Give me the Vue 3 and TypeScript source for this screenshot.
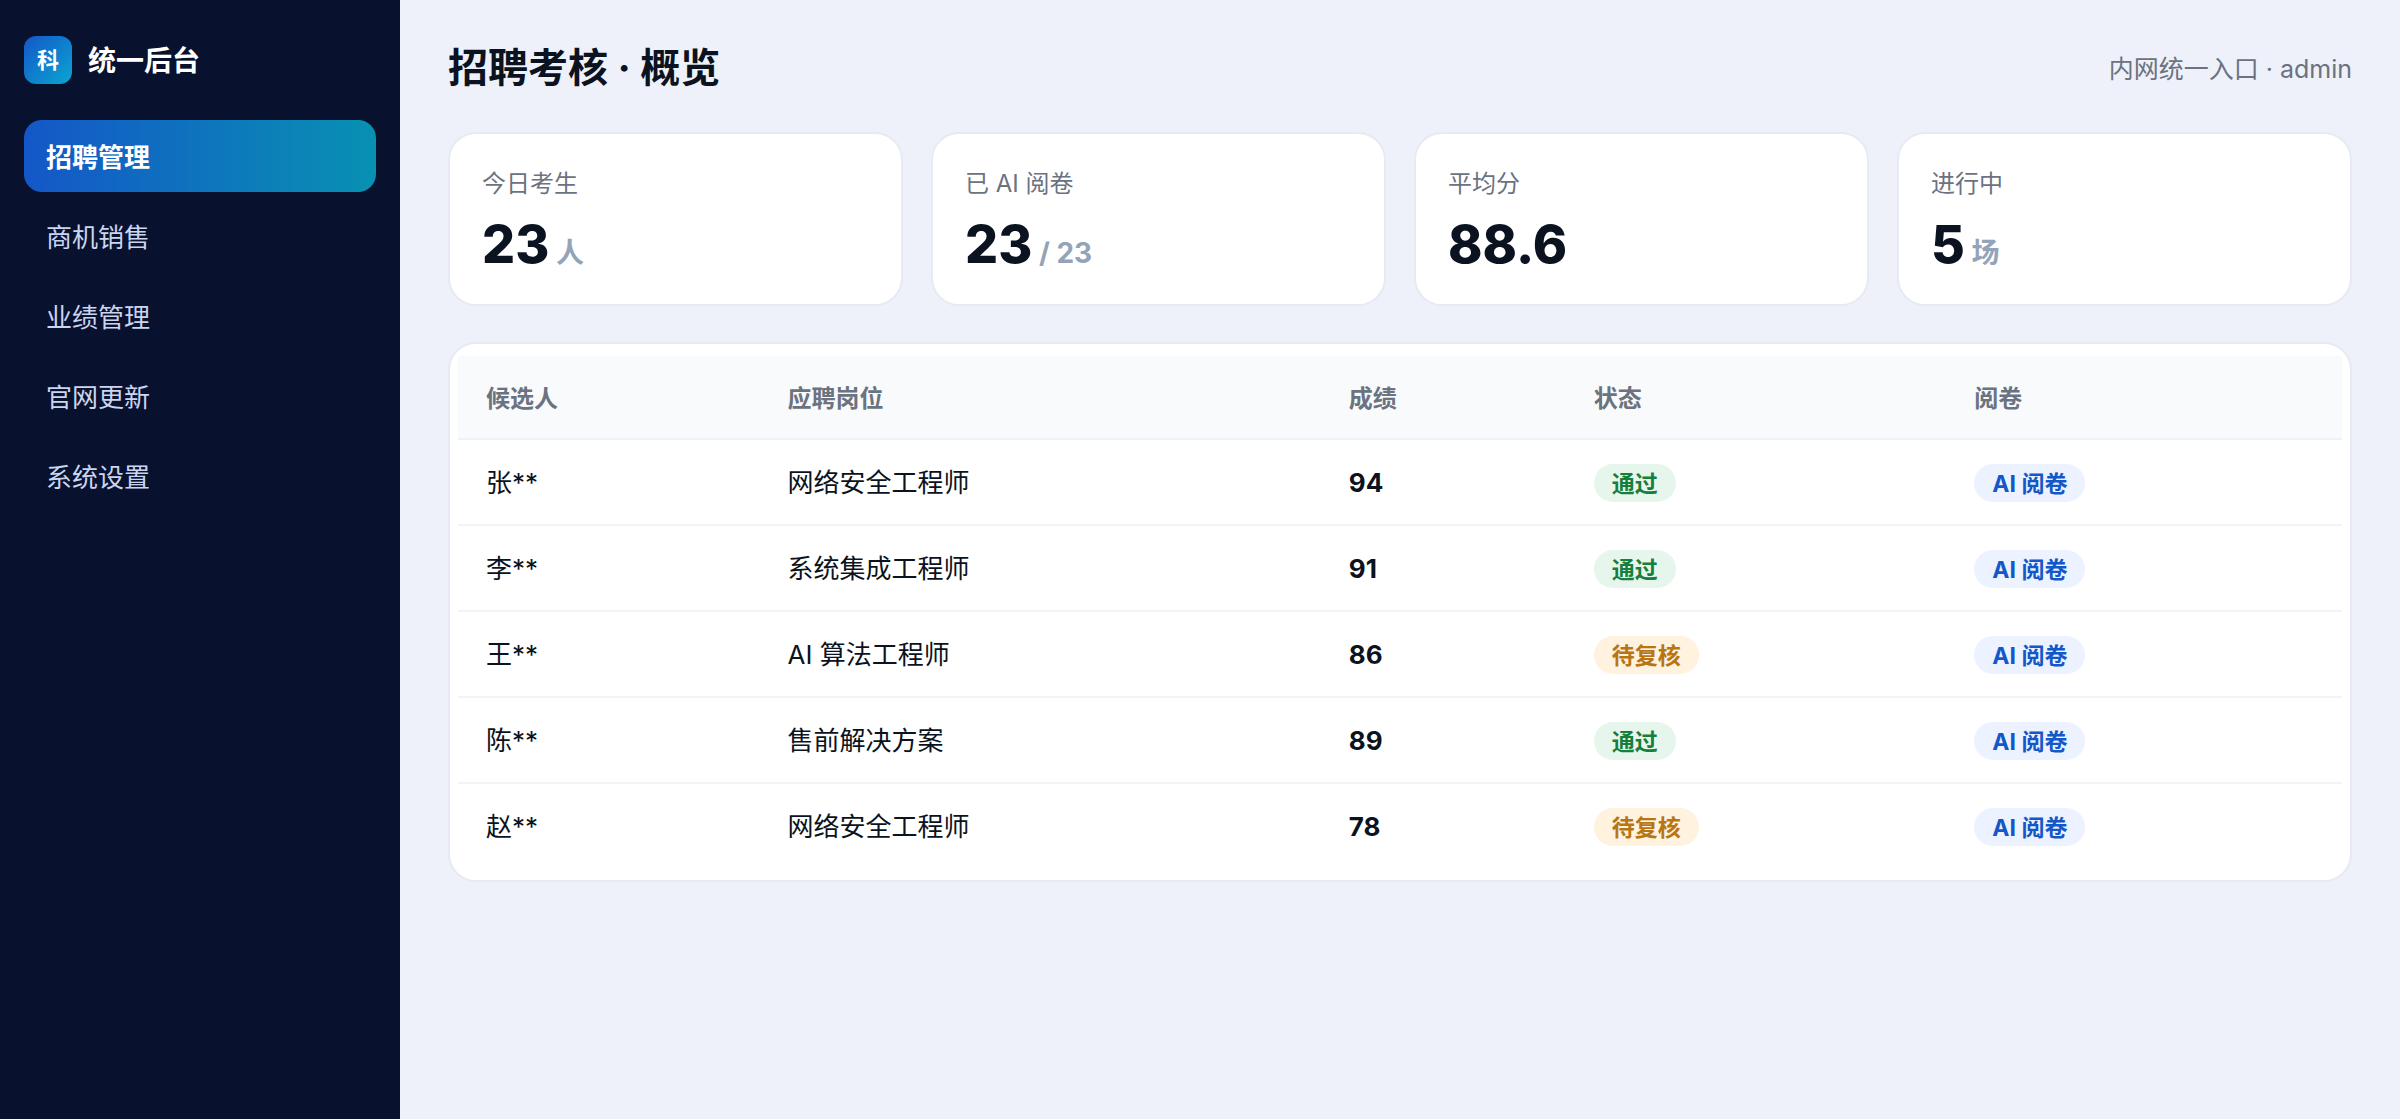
<script setup lang="ts">
import { ref } from 'vue'

interface Stat {
  label: string
  value: string
  unit?: string
}

interface Candidate {
  name: string
  position: string
  score: number
  passed: boolean
}

const menu: string[] = ['招聘管理', '商机销售', '业绩管理', '官网更新', '系统设置']
const active = ref<string>('招聘管理')

const stats: Stat[] = [
  { label: '今日考生', value: '23', unit: '人' },
  { label: '已 AI 阅卷', value: '23', unit: '/ 23' },
  { label: '平均分', value: '88.6' },
  { label: '进行中', value: '5', unit: '场' },
]

const candidates: Candidate[] = [
  { name: '张**', position: '网络安全工程师', score: 94, passed: true },
  { name: '李**', position: '系统集成工程师', score: 91, passed: true },
  { name: '王**', position: 'AI 算法工程师', score: 86, passed: false },
  { name: '陈**', position: '售前解决方案', score: 89, passed: true },
  { name: '赵**', position: '网络安全工程师', score: 78, passed: false },
]
</script>

<template>
  <div class="layout">
    <aside class="sidebar">
      <div class="brand">
        <span class="logo">科</span>
        <span class="brand-name">统一后台</span>
      </div>
      <nav class="menu">
        <button
          v-for="item in menu"
          :key="item"
          type="button"
          class="menu-item"
          :class="{ active: item === active }"
          @click="active = item"
        >
          {{ item }}
        </button>
      </nav>
    </aside>

    <main class="content">
      <header class="topbar">
        <h1>招聘考核 · 概览</h1>
        <span class="account">内网统一入口 · admin</span>
      </header>

      <section class="stats">
        <article v-for="stat in stats" :key="stat.label" class="stat">
          <div class="stat-label">{{ stat.label }}</div>
          <div class="stat-value">
            {{ stat.value }}<span v-if="stat.unit" class="stat-unit">{{ ' ' + stat.unit }}</span>
          </div>
        </article>
      </section>

      <section class="panel">
        <table>
          <thead>
            <tr>
              <th class="col-name">候选人</th>
              <th class="col-position">应聘岗位</th>
              <th class="col-score">成绩</th>
              <th class="col-status">状态</th>
              <th class="col-marking">阅卷</th>
            </tr>
          </thead>
          <tbody>
            <tr v-for="(person, index) in candidates" :key="index">
              <td>{{ person.name }}</td>
              <td>{{ person.position }}</td>
              <td class="score">{{ person.score }}</td>
              <td class="tag-cell">
                <span class="tag" :class="person.passed ? 'pass' : 'review'">{{
                  person.passed ? '通过' : '待复核'
                }}</span>
              </td>
              <td class="tag-cell"><span class="tag ai">AI 阅卷</span></td>
            </tr>
          </tbody>
        </table>
      </section>
    </main>
  </div>
</template>

<style>
body {
  margin: 0;
  background: #eef1f9;
}
</style>

<style scoped>
.layout {
  display: grid;
  grid-template-columns: 400px 1fr;
  min-height: 100vh;
  box-sizing: border-box;
  background: #eef1f9;
  color: #0b1220;
  font-family: Inter, 'Noto Sans CJK SC', sans-serif;
  font-size: 26px;
}

.sidebar {
  padding: 36px 24px;
  background: #08122e;
}

.brand {
  display: flex;
  align-items: center;
  gap: 16px;
  margin-bottom: 36px;
  color: #fff;
}

.logo {
  width: 48px;
  height: 48px;
  border-radius: 12px;
  background: linear-gradient(135deg, #1457c8, #0aa5d2);
  font-size: 22px;
  line-height: 48px;
  font-weight: 700;
  text-align: center;
}

.brand-name {
  padding-top: 2px;
  font-size: 28px;
  line-height: 46px;
  font-weight: 700;
}

.menu {
  display: flex;
  flex-direction: column;
  gap: 8px;
}

.menu-item {
  height: 72px;
  padding: 0 22px 2px;
  border: 0;
  border-radius: 18px;
  background: transparent;
  color: #cbd5f0;
  font: inherit;
  text-align: left;
  cursor: pointer;
}

.menu-item.active {
  background: linear-gradient(90deg, #1457c8, #0891b2);
  color: #fff;
  font-weight: 700;
}

.content {
  min-width: 0;
  padding: 36px 48px;
}

.topbar {
  display: flex;
  align-items: center;
  justify-content: space-between;
  margin-bottom: 32px;
}

h1 {
  margin: 0;
  font-size: 40px;
  line-height: 64px;
  font-weight: 700;
}

.account {
  padding-top: 2px;
  color: #6b7280;
  font-size: 25px;
  line-height: 32px;
}

.stats {
  display: grid;
  grid-template-columns: repeat(4, 1fr);
  gap: 28px;
  margin-bottom: 36px;
}

.stat,
.panel {
  border: 2px solid #e5eaf3;
  border-radius: 28px;
  background: #fff;
}

.stat {
  padding: 32px 32px 28px;
}

.stat-label {
  color: #6b7280;
  font-size: 24px;
  line-height: 36px;
}

.stat-value {
  margin-top: 12px;
  font-size: 52px;
  line-height: 62px;
  font-weight: 800;
}

.stat-unit {
  color: #94a3b8;
  font-size: 28px;
  line-height: 28px;
  font-weight: 700;
}

.panel {
  padding: 12px 8px;
}

table {
  width: 100%;
  table-layout: fixed;
  border-collapse: separate;
  border-spacing: 0;
}

.col-name {
  width: 16%;
}

.col-position {
  width: 29.8%;
}

.col-score {
  width: 13%;
}

.col-status {
  width: 20.2%;
}

.col-marking {
  width: 21%;
}

th,
td {
  box-sizing: border-box;
  text-align: left;
  white-space: nowrap;
}

th {
  height: 84px;
  padding: 0 28px 2px;
  border-bottom: 2px solid #edf1fa;
  background: #f8fafc;
  color: #6b7280;
  font-size: 24px;
  font-weight: 600;
}

td {
  height: 86px;
  padding: 2px 28px 0;
  border-bottom: 2px solid #eff4f9;
  line-height: 38px;
}

.tag-cell {
  padding-top: 0;
}

tbody tr:last-child td {
  height: 84px;
  border-bottom: 0;
}

.score {
  font-weight: 700;
}

.tag {
  display: inline-block;
  padding: 2px 18px 0;
  border-radius: 19px;
  font-size: 23px;
  line-height: 36px;
  font-weight: 700;
  vertical-align: middle;
}

.pass {
  background: #e7f6ec;
  color: #15803d;
}

.review {
  background: #fff2df;
  color: #b87514;
}

.ai {
  background: #ecf2ff;
  color: #1457c8;
}
</style>
